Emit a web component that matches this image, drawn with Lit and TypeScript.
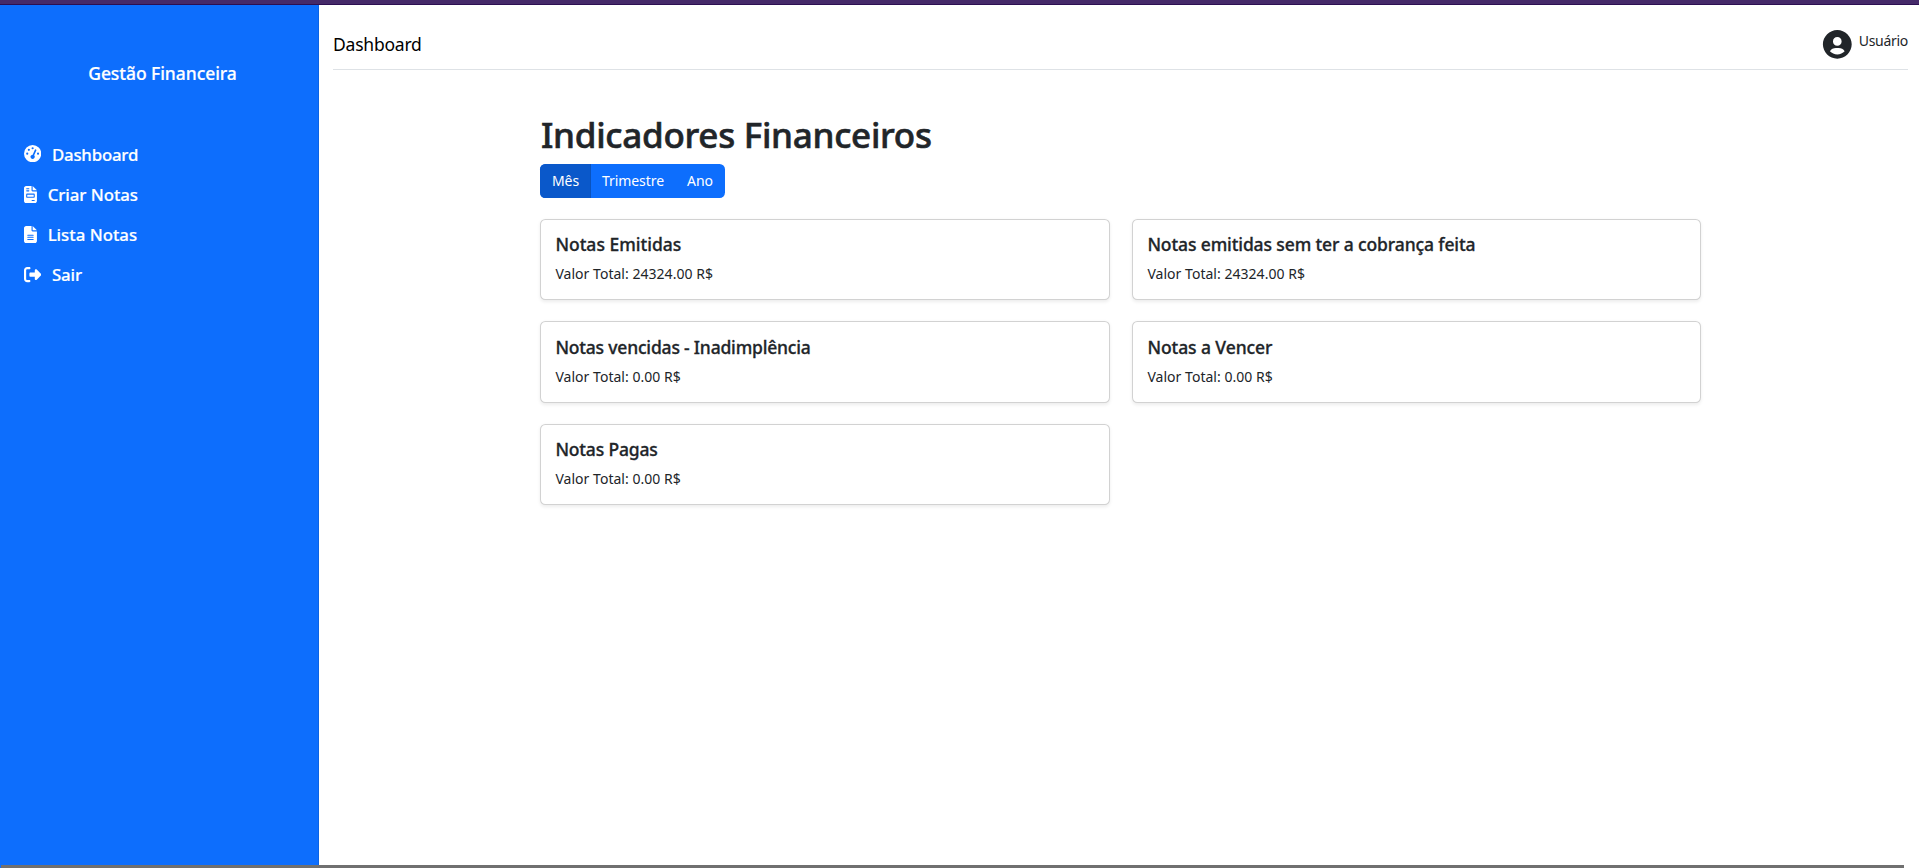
import { LitElement, html, css, svg } from "lit";
import { customElement, state } from "lit/decorators.js";
import { classMap } from "lit/directives/class-map.js";
import { styleMap } from "lit/directives/style-map.js";

const gauge = svg`<path d="M0 256a256 256 0 1 1 512 0A256 256 0 1 1 0 256zM288 96a32 32 0 1 0 -64 0 32 32 0 1 0 64 0zM256 416c35.3 0 64-28.7 64-64c0-17.4-6.9-33.1-18.1-44.6L366 161.7c5.3-12.1-.2-26.3-12.3-31.6s-26.3 .2-31.6 12.3L257.9 288c-.6 0-1.3 0-1.9 0c-35.3 0-64 28.7-64 64s28.7 64 64 64zM176 144a32 32 0 1 0 -64 0 32 32 0 1 0 64 0zM96 288a32 32 0 1 0 0-64 32 32 0 1 0 0 64zm352-32a32 32 0 1 0 -64 0 32 32 0 1 0 64 0z"/>`;
const invoice = svg`<path d="M64 0C28.7 0 0 28.7 0 64V448c0 35.3 28.7 64 64 64H320c35.3 0 64-28.7 64-64V160H256c-17.7 0-32-14.3-32-32V0H64zM256 0V128H384L256 0zM80 64h64c8.8 0 16 7.2 16 16s-7.2 16-16 16H80c-8.8 0-16-7.2-16-16s7.2-16 16-16zm0 64h64c8.8 0 16 7.2 16 16s-7.2 16-16 16H80c-8.8 0-16-7.2-16-16s7.2-16 16-16zm16 96H288c17.7 0 32 14.3 32 32v64c0 17.7-14.3 32-32 32H96c-17.7 0-32-14.3-32-32V256c0-17.7 14.3-32 32-32zm0 32v64H288V256H96zM240 416h64c8.8 0 16 7.2 16 16s-7.2 16-16 16H240c-8.8 0-16-7.2-16-16s7.2-16 16-16z"/>`;
const lines = svg`<path d="M64 0C28.7 0 0 28.7 0 64V448c0 35.3 28.7 64 64 64H320c35.3 0 64-28.7 64-64V160H256c-17.7 0-32-14.3-32-32V0H64zM256 0V128H384L256 0zM112 256H272c8.8 0 16 7.2 16 16s-7.2 16-16 16H112c-8.8 0-16-7.2-16-16s7.2-16 16-16zm0 64H272c8.8 0 16 7.2 16 16s-7.2 16-16 16H112c-8.8 0-16-7.2-16-16s7.2-16 16-16zm0 64H272c8.8 0 16 7.2 16 16s-7.2 16-16 16H112c-8.8 0-16-7.2-16-16s7.2-16 16-16z"/>`;
const exit = svg`<path d="M377.9 105.9L500.7 228.7c7.2 7.2 11.3 17.1 11.3 27.3s-4.1 20.1-11.3 27.3L377.9 406.1c-6.4 6.4-15 9.9-24 9.9c-18.7 0-33.9-15.2-33.9-33.9l0-62.1-128 0c-17.7 0-32-14.3-32-32l0-64c0-17.7 14.3-32 32-32l128 0 0-62.1c0-18.7 15.2-33.9 33.9-33.9c9 0 17.6 3.6 24 9.9zM160 96L96 96c-17.7 0-32 14.3-32 32l0 256c0 17.7 14.3 32 32 32l64 0c17.7 0 32 14.3 32 32s-14.3 32-32 32l-64 0c-53 0-96-43-96-96L0 128C0 75 43 32 96 32l64 0c17.7 0 32 14.3 32 32s-14.3 32-32 32z"/>`;

// `track` is the letter-spacing, in pixels, of each label.
const menu = [
  { label: "Dashboard", icon: gauge, width: 512, track: -0.2 },
  { label: "Criar Notas", icon: invoice, width: 384, track: -0.04 },
  { label: "Lista Notas", icon: lines, width: 384, track: 0 },
  { label: "Sair", icon: exit, width: 512, track: -0.1 },
];

const periods = ["Mês", "Trimestre", "Ano"];

const cards = [
  { title: "Notas Emitidas", value: "24324.00", track: 0 },
  { title: "Notas emitidas sem ter a cobrança feita", value: "24324.00", track: -0.12 },
  { title: "Notas vencidas - Inadimplência", value: "0.00", track: -0.19 },
  { title: "Notas a Vencer", value: "0.00", track: -0.08 },
  { title: "Notas Pagas", value: "0.00", track: -0.17 },
];

@customElement("app-sidebar")
export class AppSidebar extends LitElement {
  static styles = css`
    :host { display: block; box-sizing: border-box; width: 319px; flex: none; background: #0d6efd; color: #fff;
      border-right: 1px solid #0b63e4; font-weight: 500; -webkit-text-stroke: 0.2px currentColor; }
    .brand { margin: 0; padding: 55px 0 48.3px 7px; text-align: center; font-size: 17.5px; line-height: 26px; font-weight: 500;
      letter-spacing: -0.06px; }
    .nav { display: flex; flex-direction: column; margin: 0; padding: 0 0 0 24px; list-style: none; }
    .item { display: flex; align-items: center; height: 40px; gap: 10.7px; font-size: 16.8px; line-height: 26px; }
    .label { padding-top: 2px; }
    .icon { height: 17.28px; fill: currentColor; display: block; margin-top: 0.6px; }
    .item:first-child .icon { margin-top: -1.4px; }
  `;
  render() {
    return html`
      <h1 class="brand">Gestão Financeira</h1>
      <ul class="nav">
        ${menu.map((m) => html`
          <li class="item">
            <svg class="icon" viewBox="0 0 ${m.width} 512">${m.icon}</svg>
            <span class="label" style=${styleMap({ letterSpacing: `${m.track}px` })}>${m.label}</span>
          </li>`)}
      </ul>`;
  }
}

@customElement("indicator-card")
export class IndicatorCard extends LitElement {
  static properties = { heading: {}, value: {}, track: { type: Number } };
  declare heading: string;
  declare value: string;
  declare track: number;
  static styles = css`
    :host { display: block; box-sizing: border-box; padding: 14.4px; background: #fff; border: 1px solid rgba(0, 0, 0, 0.175);
      border-radius: 5.4px; box-shadow: 0 1.8px 3.6px rgba(0, 0, 0, 0.075); }
    .title { margin: 0 0 7.2px; font-size: 17.5px; line-height: 21.6px; font-weight: 500; -webkit-text-stroke: 0.3px currentColor; }
    .value { margin: 0; font-size: 14px; line-height: 21.6px; letter-spacing: 0.03px; }
  `;
  render() {
    return html`
      <h5 class="title" style=${styleMap({ letterSpacing: `${this.track}px` })}>${this.heading}</h5>
      <p class="value">Valor Total: ${this.value} R$</p>`;
  }
}

@customElement("app-root")
export class AppRoot extends LitElement {
  @state() private period = "Mês";
  static styles = css`
    :host { display: flex; flex-direction: column; height: 868px; overflow: hidden; background: #fff; color: #212529;
      font-family: "Noto Sans", "Open Sans", sans-serif; font-size: 14px; }
    .strip { height: 4px; flex: none; background: #452a69; border-bottom: 1px solid #2c0f52; }
    .body { display: flex; flex: 1; min-height: 0; }
    .main { flex: 1; padding: 0 11px 0 14px; }
    .header { display: flex; justify-content: space-between; height: 64px; border-bottom: 1px solid #dee2e6; }
    .page { margin-top: 26px; font-size: 17.5px; line-height: 26px; color: #000; letter-spacing: -0.22px; }
    .user { display: flex; margin-top: 22px; gap: 4px; }
    .avatar { width: 34.6px; height: 34.6px; fill: #212529; }
    .name { margin-top: 3px; line-height: 21.6px; letter-spacing: -0.3px; }
    .content { width: 1161px; margin: 43px 0 0 207px; }
    .title { margin: 0 0 8px; padding-left: 1px; font-size: 35px; line-height: 43px; font-weight: 500; letter-spacing: -0.28px;
      -webkit-text-stroke: 0.6px currentColor; }
    .group { display: flex; width: fit-content; height: 34px; border-radius: 5.4px; overflow: hidden; background: #0d6efd; }
    .btn { appearance: none; border: 0; margin: 0; padding: 0 1px 2px 0; background: none; color: #fff; font: 400 14px/21px "Noto Sans", sans-serif;
      letter-spacing: -0.05px; width: 49px; }
    .btn.wide { width: 85px; }
    .btn.on { background: #0a58ca; border-right: 1px solid #0a53be; width: 51px; padding: 0 0 2px 1px; }
    .cards { display: grid; grid-template-columns: 570px 569px; justify-content: space-between; row-gap: 21.4px; margin-top: 20.8px; }
    .foot { height: 3px; flex: none; display: flex; padding-left: 1px; background: linear-gradient(90deg, #0d6efd 2px, #fff 2px); }
    .thumb { width: 1903px; background: #707070; }
  `;
  render() {
    return html`
      <div class="strip"></div>
      <div class="body">
        <app-sidebar></app-sidebar>
        <main class="main">
          <header class="header">
            <span class="page">Dashboard</span>
            <div class="user">
              <svg class="avatar" viewBox="0 0 24 24"><path d="M12 2C6.579 2 2 6.579 2 12s4.579 10 10 10 10-4.579 10-10S17.421 2 12 2zm0 5c1.727 0 3 1.272 3 3s-1.273 3-3 3c-1.726 0-3-1.272-3-3s1.274-3 3-3zm-5.106 9.772c.897-1.32 2.393-2.2 4.106-2.2h2c1.714 0 3.209.88 4.106 2.2C15.828 18.14 14.015 19 12 19s-3.828-.86-5.106-2.228z"/></svg>
              <span class="name">Usuário</span>
            </div>
          </header>
          <section class="content">
            <h1 class="title">Indicadores Financeiros</h1>
            <div class="group">
              ${periods.map((p) => html`<button class=${classMap({ btn: true, wide: p === "Trimestre", on: p === this.period })}
                @click=${() => (this.period = p)}>${p}</button>`)}
            </div>
            <div class="cards">
              ${cards.map((c) => html`<indicator-card .heading=${c.title} .value=${c.value} .track=${c.track}></indicator-card>`)}
            </div>
          </section>
        </main>
      </div>
      <div class="foot"><div class="thumb"></div></div>`;
  }
}
